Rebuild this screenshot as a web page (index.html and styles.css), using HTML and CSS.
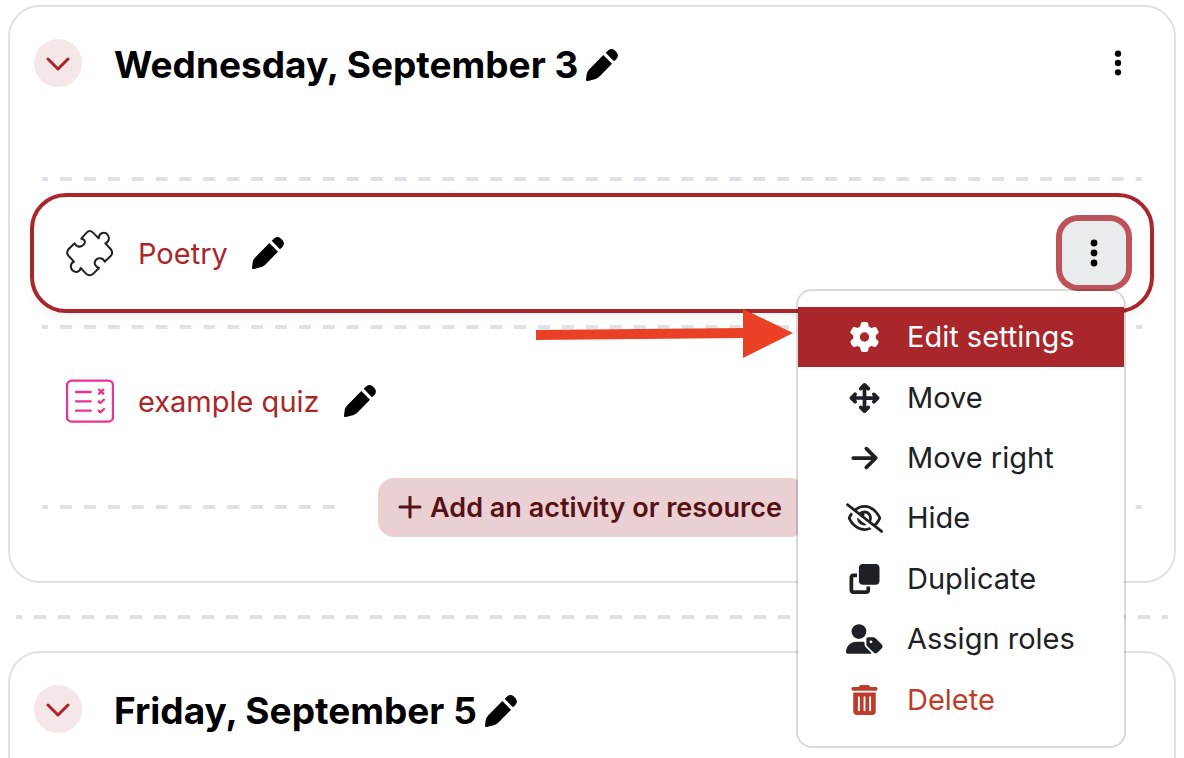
FILE: index.html
```html
<!DOCTYPE html>
<html lang="en">
<head>
   <meta charset="UTF-8">
   <meta name="viewport" content="width=device-width, initial-scale=1.0">
   <title>Course sections</title>
   <link rel="stylesheet" href="styles.css">
</head>
<body>
   <!-- shared icons -->
   <svg class="sprite" aria-hidden="true">
      <symbol id="pen" viewBox="0 0 96 96">
         <path d="M52 18L78 44L42 81Q36 87 29 90L6 96Q0 97 0 92L2 76Q4 67 10 61ZM59 11L68 3Q77-3 86 4L93 11Q99 20 92 29L84 37Z"/>
      </symbol>
      <symbol id="chevron" viewBox="0 0 24 24">
         <path d="M2 8L12 18L22 8" fill="none" stroke="currentColor" stroke-width="3" stroke-linecap="round" stroke-linejoin="round"/>
      </symbol>
      <symbol id="dots" viewBox="0 0 8 28">
         <circle cx="4" cy="4" r="3.4"/><circle cx="4" cy="14" r="3.4"/><circle cx="4" cy="24" r="3.4"/>
      </symbol>
   </svg>

   <section class="card">
      <div class="card-header">
         <button class="toggle" aria-label="Collapse"><svg><use href="#chevron"/></svg></button>
         <div class="title">
            <h3>Wednesday, September 3</h3>
            <button class="edit" aria-label="Edit section name"><svg><use href="#pen"/></svg></button>
         </div>
         <button class="more" aria-label="Section menu"><svg><use href="#dots"/></svg></button>
      </div>
      <div class="dashes"></div>
      <div class="activity selected">
         <svg class="activity-icon puzzle" viewBox="0 0 144 144">
            <path d="M46 29L62 11Q71 1 81 11L98 28C99 12 113 8 122 14C132 22 131 38 118 43L134 60Q143 71 134 81L116 98C112 85 94 84 88 95C83 104 89 114 99 117L82 134Q71 143 60 134L44 117C42 128 32 131 24 127C11 121 12 101 24 98L8 81Q-1 71 8 60L26 43C29 53 42 56 51 49C60 42 58 30 46 29Z"/>
         </svg>
         <a href="#">Poetry</a>
         <button class="edit" aria-label="Edit title"><svg><use href="#pen"/></svg></button>
         <div class="dropdown">
            <button class="more active" aria-label="Activity menu" aria-expanded="true"><svg><use href="#dots"/></svg></button>
            <div class="menu">
               <a href="#" class="current">
                  <svg viewBox="0 0 512 512"><path d="M495.900 166.600c3.200 8.700 .5 18.400-6.400 24.600l-43.300 39.400c1.100 8.300 1.700 16.800 1.700 25.400s-.6 17.100-1.700 25.400l43.300 39.400c6.900 6.200 9.600 15.900 6.400 24.600c-4.400 11.900-9.700 23.300-15.800 34.300l-4.700 8.100c-6.600 11-14 21.400-22.100 31.200c-5.900 7.200-15.700 9.600-24.500 6.800l-55.700-17.700c-13.400 10.300-28.200 18.900-44 25.400l-12.500 57.100c-2 9.100-9 16.300-18.200 17.800c-13.800 2.300-28 3.500-42.500 3.500s-28.700-1.200-42.500-3.500c-9.200-1.500-16.200-8.700-18.200-17.800l-12.500-57.100c-15.800-6.500-30.600-15.100-44-25.400L83.100 425.900c-8.800 2.800-18.600 .3-24.500-6.800c-8.100-9.800-15.500-20.200-22.100-31.200l-4.700-8.100c-6.100-11-11.400-22.400-15.800-34.300c-3.200-8.700-.5-18.400 6.400-24.600l43.300-39.400C64.600 273.100 64 264.600 64 256s.6-17.100 1.700-25.400L22.400 191.200c-6.900-6.200-9.600-15.900-6.400-24.600c4.400-11.900 9.700-23.300 15.800-34.300l4.700-8.100c6.600-11 14-21.400 22.100-31.200c5.900-7.200 15.700-9.600 24.500-6.800l55.700 17.700c13.400-10.300 28.200-18.900 44-25.400l12.500-57.100c2-9.100 9-16.300 18.200-17.800C227.300 1.200 241.500 0 256 0s28.700 1.200 42.500 3.500c9.200 1.500 16.200 8.700 18.200 17.800l12.500 57.100c15.800 6.500 30.600 15.100 44 25.400l55.700-17.700c8.800-2.800 18.600-.3 24.500 6.800c8.100 9.800 15.500 20.200 22.100 31.200l4.700 8.100c6.100 11 11.400 22.400 15.800 34.300zM256 336a80 80 0 1 0 0-160 80 80 0 1 0 0 160z"/></svg>
                  Edit settings
               </a>
               <a href="#">
                  <svg viewBox="0 0 512 512"><path d="M278.600 9.400c-12.500-12.500-32.800-12.500-45.300 0l-64 64c-12.500 12.500-12.500 32.800 0 45.300s32.800 12.500 45.300 0l9.400-9.400V224H109.300l9.400-9.400c12.500-12.500 12.500-32.800 0-45.300s-32.800-12.500-45.300 0l-64 64c-12.500 12.500-12.500 32.800 0 45.300l64 64c12.500 12.500 32.800 12.500 45.300 0s12.500-32.800 0-45.300l-9.400-9.400H224V402.700l-9.400-9.400c-12.500-12.500-32.800-12.500-45.300 0s-12.500 32.800 0 45.300l64 64c12.500 12.500 32.800 12.500 45.300 0l64-64c12.500-12.500 12.500-32.800 0-45.300s-32.800-12.500-45.300 0l-9.400 9.400V288H402.700l-9.400 9.400c-12.500 12.500-12.500 32.800 0 45.300s32.800 12.500 45.300 0l64-64c12.500-12.500 12.500-32.800 0-45.300l-64-64c-12.500-12.500-32.800-12.500-45.300 0s-12.500 32.800 0 45.300l9.400 9.400H288V109.300l9.400 9.400c12.500 12.500 32.800 12.500 45.300 0s12.500-32.800 0-45.300l-64-64z"/></svg>
                  Move
               </a>
               <a href="#">
                  <svg viewBox="0 0 448 512"><path d="M438.600 278.600c12.500-12.500 12.500-32.800 0-45.300l-160-160c-12.500-12.500-32.800-12.500-45.300 0s-12.500 32.800 0 45.300L338.800 224 32 224c-17.700 0-32 14.300-32 32s14.300 32 32 32l306.700 0L233.400 393.400c-12.500 12.500-12.500 32.800 0 45.300s32.800 12.500 45.300 0l160-160z"/></svg>
                  Move right
               </a>
               <a href="#">
                  <svg viewBox="0 0 640 512"><path d="M38.800 5.100C28.400-3.100 13.300-1.200 5.100 9.200S-1.200 34.700 9.200 42.900l592 464c10.400 8.200 25.500 6.300 33.700-4.100s6.300-25.500-4.100-33.700L525.600 386.700c39.600-40.600 66.400-86.100 79.900-118.400c3.300-7.900 3.300-16.700 0-24.600c-14.900-35.700-46.200-87.700-93-131.100C465.500 68.800 400.800 32 320 32c-68.200 0-125 26.300-169.300 60.800L38.800 5.100zm151 118.300C226 97.700 269.500 80 320 80c65.200 0 118.800 29.600 159.900 67.700C518.400 183.500 545 226 558.600 256c-12.600 28-36.600 66.800-70.900 100.900l-53.800-42.200c9.100-17.600 14.200-37.500 14.200-58.700c0-70.700-57.300-128-128-128c-32.200 0-61.700 11.900-84.200 31.500l-46.100-36.100zM394.900 284.200l-81.500-63.900c4.200-8.500 6.600-18.200 6.600-28.300c0-5.500-.7-10.900-2-16c.7 0 1.300 0 2 0c44.200 0 80 35.800 80 80c0 9.900-1.800 19.400-5.100 28.200zm9.400 130.300C378.800 425.400 350.700 432 320 432c-65.200 0-118.800-29.600-159.900-67.700C121.600 328.500 95 286 81.400 256c8.300-18.400 21.500-41.500 39.400-64.800L83.100 161.500C60.300 191.200 44 220.800 34.500 243.700c-3.300 7.900-3.300 16.700 0 24.600c14.900 35.700 46.200 87.700 93 131.100C174.500 443.200 239.200 480 320 480c47.800 0 89.900-12.900 126.200-32.500l-41.900-33zM192 256c0 70.700 57.300 128 128 128c13.300 0 26.100-2 38.200-5.800L302 334c-23.500-5.400-43.100-21.200-53.700-42.300l-56.100-44.200c-.2 2.800-.3 5.600-.3 8.500z"/></svg>
                  Hide
               </a>
               <a href="#">
                  <svg viewBox="0 0 512 512"><path d="M288 448H64V224h64V160H64c-35.300 0-64 28.700-64 64V448c0 35.300 28.700 64 64 64H288c35.300 0 64-28.700 64-64V384H288v64zm-64-96H448c35.300 0 64-28.700 64-64V64c0-35.300-28.700-64-64-64H224c-35.300 0-64 28.700-64 64V288c0 35.300 28.700 64 64 64z"/></svg>
                  Duplicate
               </a>
               <a href="#">
                  <svg viewBox="0 0 640 512"><path d="M224 256A128 128 0 1 0 224 0a128 128 0 1 0 0 256zm-45.700 48C79.800 304 0 383.800 0 482.300C0 498.700 13.300 512 29.700 512l388.600 0c10 0 18.800-4.900 24.200-12.500l-99.200-99.200c-14.900-14.900-23.300-35.100-23.300-56.100v-33c-15.900-4.700-32.800-7.200-50.300-7.200l-91.400 0zM384 224c-17.700 0-32 14.300-32 32l0 82.700c0 17 6.700 33.300 18.700 45.300L478.100 491.300c18.700 18.700 49.100 18.700 67.900 0l73.400-73.400c18.700-18.700 18.700-49.100 0-67.900L512 242.700c-12-12-28.300-18.700-45.300-18.700L384 224zm24 80a24 24 0 1 1 48 0 24 24 0 1 1 -48 0z"/></svg>
                  Assign roles
               </a>
               <a href="#" class="danger">
                  <svg viewBox="0 0 448 512"><path fill-rule="evenodd" d="M135.200 17.700L128 32H32a32 32 0 0 0 0 64H416a32 32 0 0 0 0-64H320l-7.200-14.300C307.400 6.800 296.300 0 284.200 0H163.800c-12.100 0-23.200 6.800-28.600 17.700zM32 128V448a64 64 0 0 0 64 64H352a64 64 0 0 0 64-64V128zM112 208a16 16 0 0 1 32 0V432a16 16 0 0 1-32 0zM208 208a16 16 0 0 1 32 0V432a16 16 0 0 1-32 0zM304 208a16 16 0 0 1 32 0V432a16 16 0 0 1-32 0z"/></svg>
                  Delete
               </a>
            </div>
            <!-- pointer to the first menu entry -->
            <svg class="pointer" viewBox="0 0 258 52" aria-hidden="true">
               <path d="M0 22L207 20V1L257 25L207 50V30L0 32Z"/>
            </svg>
         </div>
      </div>
      <div class="dashes"></div>
      <div class="activity">
         <svg class="activity-icon quiz" viewBox="0 0 144 144">
            <rect x="3" y="11" width="138" height="123" rx="14"/>
            <path d="M30 45H74M30 73H74M30 101H74"/>
            <path d="M99 38L112 50M112 38L99 50M98 73L103 78L114 68M98 101L103 106L114 96"/>
         </svg>
         <a href="#">example quiz</a>
         <button class="edit" aria-label="Edit title"><svg><use href="#pen"/></svg></button>
      </div>
      <div class="add-row">
         <div class="add-wrap">
            <button class="add">
               <svg viewBox="0 0 24 24"><path d="M12 1V21M2 11H22" stroke="currentColor" stroke-width="3" stroke-linecap="round"/></svg>
               Add an activity or resource
            </button>
         </div>
      </div>
   </section>

   <div class="dashes between"></div>

   <section class="card last">
      <div class="card-header">
         <button class="toggle" aria-label="Collapse"><svg><use href="#chevron"/></svg></button>
         <div class="title">
            <h3>Friday, September 5</h3>
            <button class="edit" aria-label="Edit section name"><svg><use href="#pen"/></svg></button>
         </div>
      </div>
   </section>
</body>
</html>
```
FILE: styles.css
```css
* {
   box-sizing: border-box;
   margin: 0;
   padding: 0;
}
body {
   display: flex;
   flex-direction: column;
   min-height: 100vh;
   padding: 5px 8px 0;
   background-color: #fff;
   color: #1d2125;
   font-family: Inter, 'Helvetica Neue', sans-serif;
   font-size: 29px;
   line-height: 40px;
}
button {
   border: none;
   background-color: transparent;
   color: #000;
   font: inherit;
   cursor: pointer;
}
a {
   color: #a9272a;
   text-decoration: none;
}
svg {
   display: block;
   flex: none;
   fill: currentColor;
}
.sprite {
   position: absolute;
   width: 0;
   height: 0;
}
.card {
   border: 2px solid #dee2e6;
   border-radius: 32px;
}
.card.last {
   flex: 1;
   border-bottom: none;
   border-radius: 32px 32px 0 0;
}
.card-header {
   display: flex;
   align-items: center;
   height: 80px;
   padding: 32px 24px 0;
   margin-bottom: 90px;
}
.card.last .card-header {
   margin-bottom: 0;
}
.title {
   display: flex;
   align-items: center;
   gap: 8px;
   margin-left: 32px;
   padding-top: 4px;
}
h3 {
   color: #000;
   font-size: 37px;
   font-weight: 700;
   line-height: 48px;
}
.toggle {
   display: flex;
   align-items: center;
   justify-content: center;
   width: 48px;
   height: 48px;
   border-radius: 50%;
   background-color: #f5e6e8;
   color: #a9272a;
}
.toggle svg {
   width: 24px;
   height: 24px;
}
.edit svg {
   width: 32px;
   height: 32px;
}
.more {
   display: flex;
   align-items: center;
   justify-content: center;
   width: 64px;
   height: 48px;
   margin-left: auto;
}
.more svg {
   width: 8px;
   height: 26px;
}
.more.active {
   height: 64px;
   border-radius: 16px;
   background-color: #e9ecef;
   box-shadow: 0 0 0 6px #bd535b;
}
.more.active svg {
   height: 28px;
}
.dashes, .add-row {
   background-image: linear-gradient(to right, #dee2e6 25%, transparent 25%, transparent 75%, #dee2e6 75%);
   background-position: 0 27px;
   background-repeat: round no-repeat;
   background-size: 24px 4px;
}
.dashes {
   height: 4px;
   margin: 12px 32px;
   background-position: 0 0;
}
.dashes.between {
   margin: 32px 8px;
}
.activity {
   display: flex;
   align-items: center;
   height: 120px;
   margin: 0 20px;
   padding: 0 24px 0 32px;
   border: 4px solid transparent;
   border-radius: 36px;
}
.activity.selected {
   border-color: #a9272a;
   box-shadow: 0 4px 8px rgba(0, 0, 0, 0.05);
}
.activity-icon {
   width: 48px;
   height: 48px;
   fill: none;
   stroke-linecap: round;
   stroke-linejoin: round;
}
.puzzle {
   stroke: #1d2125;
   stroke-width: 6px;
}
.quiz {
   stroke: #e83390;
   stroke-width: 7px;
}
.activity > a {
   margin: 0 24px;
   padding-top: 2px;
}
.dropdown {
   position: relative;
   margin-left: auto;
}
.menu {
   position: absolute;
   top: 68px;
   right: 0;
   z-index: 1;
   display: flex;
   flex-direction: column;
   width: 330px;
   min-height: 459px;
   padding: 16px 0;
   border: 2px solid rgba(0, 0, 0, 0.15);
   border-radius: 16px;
   background-color: #fff;
   background-clip: padding-box;
}
.menu a {
   display: flex;
   flex: 1;
   align-items: center;
   gap: 24px;
   padding: 0 48px;
   color: #1d2125;
   white-space: nowrap;
}
.menu a svg {
   width: 37px;
   height: 30px;
}
.menu a.current {
   background-color: #a9272a;
   color: #fff;
}
.menu a.danger {
   color: #bc3d2c;
}
.pointer {
   position: absolute;
   top: 87px;
   right: 332px;
   width: 258px;
   height: 52px;
   fill: #ea4025;
}
.add-row {
   display: flex;
   justify-content: center;
   margin: 17px 32px 44px;
}
.add-wrap {
   padding: 0 32px;
   background-color: #fff;
}
.add {
   display: flex;
   align-items: center;
   gap: 8px;
   height: 59px;
   padding: 0 24px 0 20px;
   border-radius: 16px;
   background-color: #ebd0d3;
   color: #551215;
   font-size: 27px;
   font-weight: 600;
}
.add svg {
   width: 24px;
   height: 24px;
}
```
